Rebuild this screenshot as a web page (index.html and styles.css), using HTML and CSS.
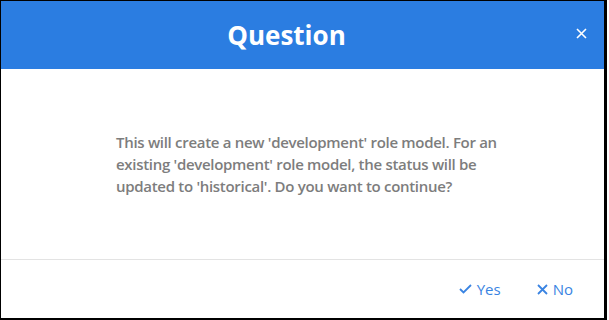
FILE: index.html
```html
<!DOCTYPE html>
<html lang="en">
<head>
    <meta charset="UTF-8">
    <meta name="viewport" content="width=device-width, initial-scale=1.0">
    <title>Question</title>
    <link rel="stylesheet" href="styles.css">
</head>
<body>
    <div class="dialog">
        <div class="dialog-header">
            <h1>Question</h1>
            <button class="close-btn" aria-label="Close">
                <svg width="11" height="11" viewBox="0 0 11 11"><path d="M1 1L10 10M10 1L1 10" stroke="#fff" stroke-width="1.6" fill="none"/></svg>
            </button>
        </div>
        <div class="dialog-body">
            <p>This will create a new 'development' role model. For an existing 'development' role model, the status will be updated to 'historical'. Do you want to continue?</p>
        </div>
        <div class="dialog-footer">
            <button class="btn-link">
                <svg width="13" height="10" viewBox="0 0 13 10"><path d="M1 5L4.5 8.5L12 1" stroke="currentColor" stroke-width="1.8" fill="none"/></svg>
                Yes
            </button>
            <button class="btn-link">
                <svg width="11" height="11" viewBox="0 0 11 11"><path d="M1 1L10 10M10 1L1 10" stroke="currentColor" stroke-width="1.8" fill="none"/></svg>
                No
            </button>
        </div>
    </div>
</body>
</html>
```

FILE: styles.css
```css
body {
    margin: 0;
    font-family: "Open Sans", "Noto Sans", sans-serif;
    background: white;
}

.dialog {
    width: 603px;
    height: 317px;
    border-style: solid;
    border-color: #000;
    border-width: 1px 3px 2px 1px;
    display: flex;
    flex-direction: column;
    background: white;
}

.dialog-header {
    height: 68px;
    background: #2b7de1;
    display: flex;
    align-items: center;
    justify-content: center;
    padding-right: 32px;
    position: relative;
}

.dialog-header h1 {
    margin: 0;
    color: white;
    font-size: 26px;
    font-weight: 700;
}

.close-btn {
    position: absolute;
    right: 17px;
    top: 27px;
    background: none;
    border: none;
    padding: 0;
    cursor: pointer;
    line-height: 0;
}

.dialog-body {
    flex: 1;
    padding: 0 0 0 115px;
    display: flex;
    align-items: center;
    border-bottom: 1px solid #e3e3e3;
}

.dialog-body p {
    margin: 0;
    width: 390px;
    color: #7d7d7d;
    font-size: 15px;
    font-weight: 600;
    letter-spacing: -0.3px;
    line-height: 22px;
}

.dialog-footer {
    height: 58px;
    display: flex;
    justify-content: flex-end;
    align-items: center;
    gap: 36px;
    padding-right: 31px;
}

.btn-link {
    background: none;
    border: none;
    padding: 0;
    color: #3a84e2;
    font-family: inherit;
    font-size: 15px;
    display: flex;
    align-items: center;
    gap: 5px;
    cursor: pointer;
}
```
